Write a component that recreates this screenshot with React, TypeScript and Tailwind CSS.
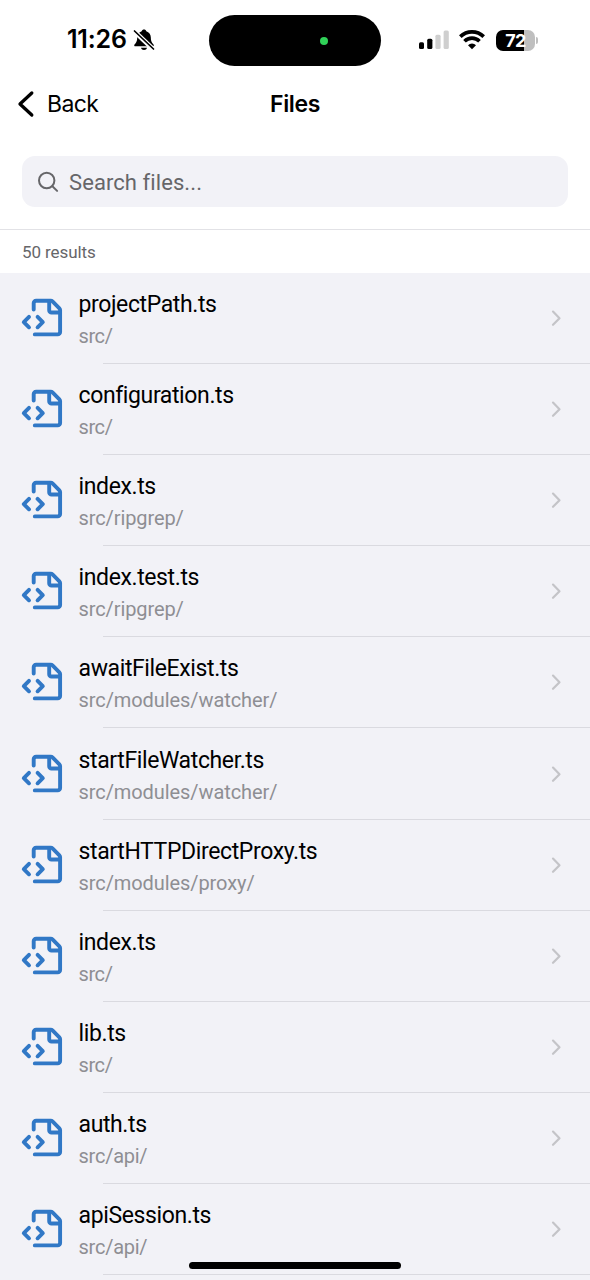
import React from 'react';

type FileEntry = { name: string; path: string; pathClass: string };

const files: FileEntry[] = [
  { name: 'projectPath.ts', path: 'src/', pathClass: 'tracking-[-0.4px]' },
  { name: 'configuration.ts', path: 'src/', pathClass: 'tracking-[-0.4px]' },
  { name: 'index.ts', path: 'src/ripgrep/', pathClass: 'tracking-[-0.1px]' },
  { name: 'index.test.ts', path: 'src/ripgrep/', pathClass: 'tracking-[-0.1px]' },
  { name: 'awaitFileExist.ts', path: 'src/modules/watcher/', pathClass: 'tracking-[-0.08px]' },
  { name: 'startFileWatcher.ts', path: 'src/modules/watcher/', pathClass: 'tracking-[-0.08px]' },
  { name: 'startHTTPDirectProxy.ts', path: 'src/modules/proxy/', pathClass: 'tracking-[-0.08px]' },
  { name: 'index.ts', path: 'src/', pathClass: 'tracking-[-0.4px]' },
  { name: 'lib.ts', path: 'src/', pathClass: 'tracking-[-0.4px]' },
  { name: 'auth.ts', path: 'src/api/', pathClass: 'tracking-[-0.25px]' },
  { name: 'apiSession.ts', path: 'src/api/', pathClass: 'tracking-[-0.25px]' },
];

function BellOff() {
  return (
    <svg className="ml-[5px] h-[24px] w-[22px] shrink-0" viewBox="0 0 22 24">
      <path d="M11 1.500c-1.200 0-2 .7-2.300 1.700C6 4.200 4.200 6.500 4.200 9.200c0 4-.9 5.300-2.500 7-.9 1-.5 2.100.8 2.100h17c1.300 0 1.700-1.100.8-2.100-1.600-1.700-2.500-3-2.500-7 0-2.700-1.800-5-4.500-6C13 2.200 12.200 1.500 11 1.500Z" fill="#000" />
      <path d="M8 19.800h6c-.3 1.400-1.500 2.200-3 2.200s-2.700-.8-3-2.200Z" fill="#000" />
      <path d="M1 3 20.500 21.500" stroke="#fff" strokeWidth="4.600" />
      <path d="M1.500 3 20.500 21" stroke="#000" strokeWidth="1.700" strokeLinecap="round" />
    </svg>
  );
}

function Signal() {
  return (
    <svg className="h-[20px] w-[30px]" viewBox="0 0 30 20">
      <rect x="0" y="12.200" width="5" height="6.800" rx="1.500" fill="#000" />
      <rect x="8.200" y="8.700" width="5.200" height="10.300" rx="1.500" fill="#000" />
      <rect x="16.400" y="4.700" width="5.200" height="14.300" rx="1.500" fill="#cfcfcf" />
      <rect x="24.600" y="0.500" width="5.200" height="18.500" rx="1.500" fill="#cfcfcf" />
    </svg>
  );
}

function Wifi() {
  return (
    <svg className="ml-[10px] h-[20px] w-[26px]" viewBox="0 0 26 20" fill="none" stroke="#000" strokeWidth="3.700">
      <path d="M1.300 6.600a16.800 16.800 0 0 1 23.400 0" />
      <path d="M5.500 11.200a10.700 10.700 0 0 1 15 0" />
      <path d="M13 19.200 9 15.200a5.700 5.700 0 0 1 8 0Z" fill="#000" stroke="none" />
    </svg>
  );
}

function Battery() {
  return (
    <div className="ml-[11px] flex items-center">
      <div className="flex h-[21px] w-[39px] items-center justify-center rounded-[7px] bg-[linear-gradient(90deg,#000_28px,#bfbfbf_28px)] font-['Inter'] text-[18px] leading-[21px] font-bold tracking-[-0.6px] text-white">
        72
      </div>
      <div className="ml-[1px] h-[7px] w-[2px] rounded-r-full bg-[#bfbfbf]" />
    </div>
  );
}

function FileCode() {
  return (
    <svg className="h-[40px] w-[42px] shrink-0" viewBox="21 297.700 42 40" fill="none" stroke="#3178c6" strokeWidth="3.900" strokeLinecap="round" strokeLinejoin="round">
      <path d="M33.700 309.300v-6.500a2.400 2.400 0 0 1 2.400-2.400h14.600c.7 0 1.300.2 1.800.7l6.900 6.900c.5.500.7 1.100.7 1.800v21.900a2.400 2.400 0 0 1-2.400 2.400H34.800" />
      <path d="M49.200 301.200v8.700a2.300 2.300 0 0 0 2.300 2.300h8.300" />
      <path d="m29 316.600-5.200 5.200 5.200 5.200M37.600 316.600l5.200 5.200-5.200 5.200" />
    </svg>
  );
}

function FileRow({ file }: { file: FileEntry }) {
  return (
    <div className="h-[91.1px] shrink-0">
      <div className="flex h-[90.1px] items-center pl-[21px] pr-[28px]">
        <FileCode />
        <div className="ml-[15.500px] flex-1 whitespace-nowrap pt-[5px]">
          <div className="h-[31px] text-[23px] leading-[30px] tracking-[-0.38px] text-black">{file.name}</div>
          <div className="h-[30px] text-[20px] leading-[30px] text-[#8e8e93]"><span className={file.pathClass}>{file.path}</span></div>
        </div>
        <svg className="h-[18px] w-[12px]" viewBox="0 0 12 18" fill="none" stroke="#c4c4c8" strokeWidth="2.200" strokeLinecap="round" strokeLinejoin="round">
          <path d="m3 2.600 6.500 6.600L3 15.800" />
        </svg>
      </div>
      <div className="ml-[103px] h-px bg-[#dadae0]" />
    </div>
  );
}

export default function App() {
  return (
    <div className="relative flex h-[1280px] w-[590px] flex-col overflow-hidden bg-white font-['Roboto',sans-serif]">
      <header className="flex h-[80px] shrink-0 items-start">
        <div className="flex h-[80px] w-[209px] items-center pl-[67px] font-['Inter',sans-serif] text-[25px] font-semibold tracking-[-0.2px]">
          <span className="w-[61px] whitespace-nowrap">11:26</span>
          <BellOff />
        </div>
        <div className="mt-[15px] flex h-[51px] w-[172px] items-center rounded-full bg-black pl-[111px]">
          <div className="size-[8px] rounded-full bg-[#30d158]" />
        </div>
        <div className="flex h-[80px] items-center pl-[38px]">
          <Signal />
          <Wifi />
          <Battery />
        </div>
      </header>
      <nav className="grid h-[48px] shrink-0 grid-cols-[1fr_auto_1fr] items-center font-['Inter',sans-serif] text-[23px]">
        <div className="flex items-center pl-[17px]">
          <svg className="h-[28px] w-[18px]" viewBox="0 0 18 28" fill="none" stroke="#000" strokeWidth="3.300" strokeLinecap="round" strokeLinejoin="round">
            <path d="M14.800 3 3 14l11.800 11" />
          </svg>
          <span className="ml-[12px] tracking-[-0.6px]">Back</span>
        </div>
        <span className="font-semibold tracking-[-0.4px]">Files</span>
        <span />
      </nav>
      <div className="h-[102px] shrink-0 border-b border-[#e2e2e6] px-[22px] pt-[28px]">
        <div className="flex h-[51px] items-center rounded-[13px] bg-[#f2f2f7] pl-[15px] text-[#666669]">
          <svg className="h-[22px] w-[22px]" viewBox="0 0 22 22" fill="none" stroke="#666669" strokeWidth="2" strokeLinecap="round">
            <circle cx="9.700" cy="9.500" r="7.700" />
            <path d="m15.400 15.200 4.700 4.700" />
          </svg>
          <span className="ml-[10px] pt-px text-[22px] tracking-[0.08px]">Search files...</span>
        </div>
      </div>
      <div className="flex h-[43px] shrink-0 items-center pl-[22px] pt-[2px] text-[17px] tracking-[-0.08px] text-[#666669]">50 results</div>
      <main className="flex flex-1 flex-col overflow-hidden bg-[#f2f2f7]">
        {files.map((file, i) => <FileRow key={i} file={file} />)}
      </main>
      <div className="absolute bottom-[11px] left-[189px] h-[7px] w-[212px] rounded-full bg-black" />
    </div>
  );
}
